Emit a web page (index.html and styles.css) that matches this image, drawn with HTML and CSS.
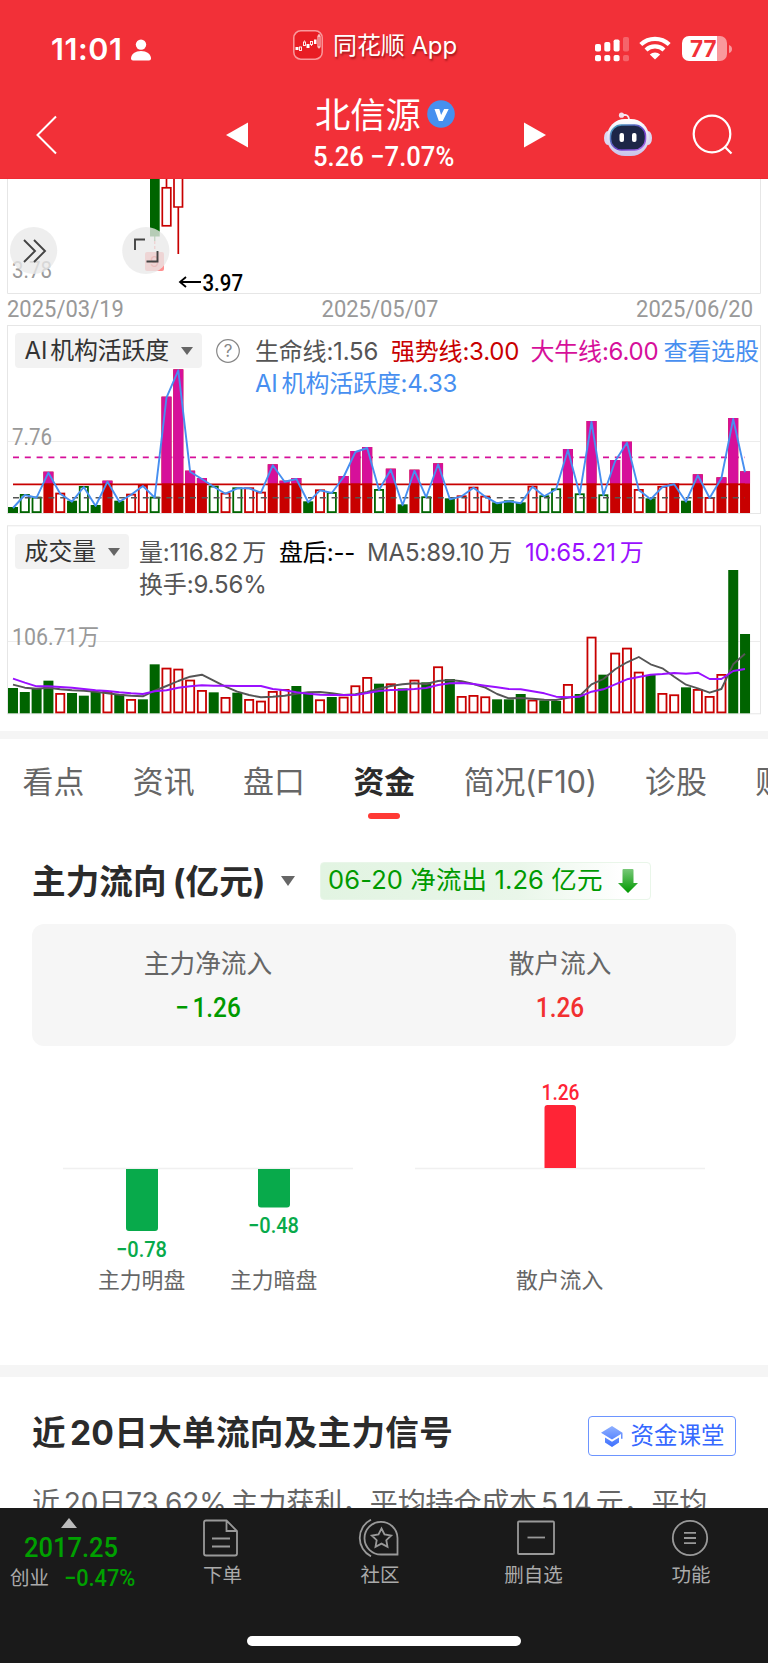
FILE: index.html
```html
<!DOCTYPE html>
<html lang="zh-CN">
<head>
<meta charset="utf-8">
<title>北信源</title>
<link rel="stylesheet" href="styles.css">
</head>
<body>
<div class="app">
  <header class="header">
    <div class="status">
      <span class="clock">11:01</span>
      <svg class="person" width="20" height="22" viewBox="0 0 20 22"><circle cx="10" cy="5.6" r="5.2" fill="#fff"/><path d="M0 19.5C0 15 4.500 12 10 12s10 3 10 7.500q0 2-2 2H2q-2 0-2-2z" fill="#fff"/></svg>
      <svg class="app-icon" width="30" height="30" viewBox="0 0 30 30"><rect x=".8" y=".8" width="28.400" height="28.400" rx="7" fill="#e81d24" stroke="#f9999c" stroke-width="1.500"/><g fill="#fff"><rect x="2.500" y="17" width="3" height="3"/><rect x="13.500" y="14" width="3" height="4"/><rect x="21" y="9.500" width="2.500" height="4.500"/></g><g fill="none" stroke="#fff" stroke-width=".9"><rect x="6.500" y="17" width="2" height="3.500"/><rect x="10.500" y="12" width="2" height="3.500"/><rect x="17.500" y="11.500" width="2" height="3"/><rect x="25" y="6" width="2" height="11"/><path d="M11.500 10.500v1M18.500 14.500v1.500M26 4v2M26 17v1.500"/></g></svg>
      <span class="app-name">同花顺 App</span>
      <svg class="signal" width="34" height="25" viewBox="0 0 34 25" fill="#fff"><rect x="0" y="7" width="6" height="7.500" rx="1.800"/><rect x="9.300" y="5" width="6" height="9.500" rx="1.800"/><rect x="18.600" y="2.500" width="6" height="12" rx="1.800"/><rect x="0" y="18" width="6" height="6.200" rx="1.800"/><rect x="9.300" y="18" width="6" height="6.200" rx="1.800"/><rect x="18.600" y="18" width="6" height="6.200" rx="1.800"/><g opacity=".25"><rect x="28" y="0" width="6" height="14.500" rx="1.800"/><rect x="28" y="18" width="6" height="6.200" rx="1.800"/></g></svg>
      <svg class="wifi" width="32" height="24" viewBox="0 0 32 24"><path d="M1.800 8.600a20.500 20.500 0 0 1 28.400 0M7 14a13 13 0 0 1 18 0" fill="none" stroke="#fff" stroke-width="4.200"/><path d="M10.800 18.500a7.500 7.500 0 0 1 10.400 0L16 23.600z" fill="#fff"/></svg>
      <div class="battery"><span>77</span></div>
      <svg class="nub" width="3" height="8" viewBox="0 0 3 8"><path d="M0 0q3 1 3 4t-3 4z" fill="#f9989c"/></svg>
    </div>
    <div class="nav">
      <svg class="back" width="22" height="40" viewBox="0 0 22 40"><path d="M20 1.500 1.500 20 20 38.500" fill="none" stroke="#fff" stroke-width="2"/></svg>
      <svg class="prev" width="22" height="26" viewBox="0 0 22 26"><path d="M22 .5v25L0 13z" fill="#fff"/></svg>
      <div class="stock">
        <div class="stock-name">北信源<svg width="28" height="28" viewBox="0 0 28 28"><circle cx="14" cy="14" r="13.800" fill="#4690ef"/><path d="M7.500 9h4.800l1.800 6 3-6h4.600l-6 12h-3.900z" fill="#fff"/></svg></div>
        <div class="stock-price">5.26 −7.07%</div>
      </div>
      <svg class="next" width="22" height="26" viewBox="0 0 22 26"><path d="M0 .5v25L22 13z" fill="#fff"/></svg>
      <svg class="robot" width="48" height="44" viewBox="0 0 48 44"><defs><linearGradient id="rb" x1="0" y1="0" x2="0" y2="1"><stop offset="0" stop-color="#fff"/><stop offset="1" stop-color="#c9c3ea"/></linearGradient><linearGradient id="rim" x1="0" y1="0" x2="1" y2="1"><stop offset="0" stop-color="#42aaba"/><stop offset=".6" stop-color="#6b3cc8"/><stop offset="1" stop-color="#b070f0"/></linearGradient></defs><circle cx="17.500" cy="3.200" r="2.600" fill="#f5dfea"/><path d="M18 3h4q3 1 3 5" fill="none" stroke="#f5e4ee" stroke-width="1.800"/><ellipse cx="4" cy="26" rx="4" ry="7" fill="#dcd6f1"/><ellipse cx="44" cy="26" rx="4" ry="7" fill="#dcd6f1"/><rect x="3" y="7" width="42" height="37" rx="18" fill="url(#rb)"/><rect x="6.500" y="13" width="35" height="25" rx="11" fill="#1d2647" stroke="url(#rim)" stroke-width="1.500"/><rect x="15.500" y="21" width="4.500" height="9" rx="2" fill="#fff"/><rect x="28" y="21" width="4.500" height="9" rx="2" fill="#fff"/></svg>
      <svg class="search" width="42" height="42" viewBox="0 0 42 42" fill="none" stroke="#fff" stroke-width="2.200"><circle cx="20" cy="20" r="18.300"/><path d="m32.500 32.500 7 7"/></svg>
    </div>
  </header>

  <section class="kline">
    <svg width="768" height="115" viewBox="0 179 768 115">
      <path d="M7.500 179v114.500h753V179" fill="none" stroke="#e6e6e6"/>
      <rect x="150" y="179" width="9.700" height="57.500" fill="#006400"/>
      <path d="M154.800 236v5" stroke="#006400"/>
      <path d="M154.800 241v10" stroke="#f55" stroke-dasharray="3 2"/>
      <rect x="145" y="252" width="19" height="19" rx="2" fill="#ff8e8e"/>
      <text x="150" y="267" font-size="15" fill="#e22">9</text>
      <g fill="#fff" stroke="#c80000" stroke-width="1.700"><path d="M166.500 179v9M178.300 207v47"/><rect x="162.300" y="187.800" width="8.500" height="38"/><path d="M174 179v28h8.500v-28"/></g>
      <text class="num axis" x="12" y="277.500" textLength="40" lengthAdjust="spacingAndGlyphs">3.78</text>
      <g fill="#e9e9e9" fill-opacity=".78"><circle cx="33.600" cy="250.500" r="23.600"/><circle cx="145.800" cy="250.500" r="23.600"/></g>
      <path d="m24 240 11 11-11 11M34 240l11 11-11 11" fill="none" stroke="#444" stroke-width="1.900"/>
      <path d="M135 250v-10.500h10M157.500 251v10.500h-11" fill="none" stroke="#444" stroke-width="1.900"/>
      <path d="M201 282h-21m6-5-6 5 6 5" fill="none" stroke="#000" stroke-width="1.800"/>
      <text class="num low" x="202.500" y="290.500" textLength="40.500" lengthAdjust="spacingAndGlyphs">3.97</text>
    </svg>
  </section>
  <div class="dates num"><span>2025/03/19</span><span>2025/05/07</span><span>2025/06/20</span></div>

  <section class="panel panel-ai">
    <svg class="plot" id="ai" width="768" height="190" viewBox="0 325 768 190"></svg>
    <div class="chip chip-ai">AI<i></i>机构活跃度<b class="caret"></b></div>
    <svg class="help" width="26" height="26" viewBox="0 0 26 26"><circle cx="13" cy="13" r="11.300" fill="none" stroke="#888" stroke-width="1.200"/><text x="13" y="19" text-anchor="middle" font-size="17" fill="#888">?</text></svg>
    <div class="legend legend-ai">
      <span>生命线:1.56</span><span class="red">强势线:3.00</span><span class="pink">大牛线:6.00</span><span class="blue">查看选股</span>
      <span class="blue wide">AI<i></i>机构活跃度:4.33</span>
    </div>
  </section>

  <section class="panel panel-vol">
    <svg class="plot" id="vol" width="768" height="190" viewBox="0 525 768 190"></svg>
    <div class="chip chip-vol">成交量<b class="caret"></b></div>
    <div class="legend legend-vol">
      <span>量:116.82<i></i>万</span><span class="black">盘后:--</span><span>MA5:89.10<i></i>万</span><span class="purple">10:65.21<i></i>万</span>
      <span class="wide">换手:9.56%</span>
    </div>
  </section>

  <div class="band band-1"></div>

  <nav class="tabs">
    <span>看点</span><span>资讯</span><span>盘口</span><span class="on">资金</span><span class="f10">简况(F10)</span><span>诊股</span><span>财务</span>
  </nav>

  <section class="flow">
    <div class="flow-head">
      <h2>主力流向<i></i>(亿元)</h2><b class="caret big"></b>
      <div class="tag"><span>06-20 净流出 1.26 亿元</span><svg width="20" height="24" viewBox="0 0 20 24"><defs><linearGradient id="ar" x1="0" y1="0" x2="0" y2="1"><stop offset="0" stop-color="#78c878"/><stop offset="1" stop-color="#009900"/></linearGradient></defs><path d="M5.500 0h9q1 0 1 1v13H20L10 24 0 14h4.500V1q0-1 1-1z" fill="url(#ar)"/></svg></div>
    </div>
    <div class="card">
      <div><p>主力净流入</p><strong class="num down"><em>−</em>1.26</strong></div>
      <div><p>散户流入</p><strong class="num up">1.26</strong></div>
    </div>
    <svg class="bars" width="768" height="319" viewBox="0 1046 768 319">
      <path d="M63 1168.500h290M415 1168.500h290" stroke="#f0f0f0" stroke-width="1.500"/>
      <path d="M126 1169h32v59q0 3-3 3h-26q-3 0-3-3zM258 1169h32v35.500q0 3-3 3h-26q-3 0-3-3z" fill="#08aa4b"/>
      <path d="M544.500 1168v-60q0-3 3-3H573q3 0 3 3v60z" fill="#ff2436"/>
      <g class="num" font-size="22" font-weight="500"><text x="116" y="1257" textLength="51" lengthAdjust="spacingAndGlyphs" fill="#08aa4b">−0.78</text><text x="248" y="1232.500" textLength="51" lengthAdjust="spacingAndGlyphs" fill="#08aa4b">−0.48</text><text x="541.500" y="1099.500" textLength="38" lengthAdjust="spacingAndGlyphs" fill="#ff2436">1.26</text></g>
      <g font-size="21.800" fill="#666"><text x="98" y="1287.500">主力明盘</text><text x="230" y="1287.500">主力暗盘</text><text x="516" y="1287.500">散户流入</text></g>
    </svg>
  </section>

  <div class="band band-2"></div>

  <section class="signal-sec">
    <div class="sig-head">
      <h2>近<i></i>20日大单流向及主力信号</h2>
      <div class="class-btn"><svg width="22" height="21" viewBox="0 0 22 21"><defs><linearGradient id="cap" x1="0" y1="0" x2="0" y2="1"><stop offset="0" stop-color="#8fb0ff"/><stop offset="1" stop-color="#3d70ff"/></linearGradient></defs><path d="M11 0l10.500 6.800v6h-1.500V8L11 13.500 0 6.800zM4 11.500l7 4.200 7-4.200v5L11 21l-7-4.500z" fill="url(#cap)"/></svg><span>资金课堂</span></div>
    </div>
    <p class="desc">近<i></i>20日73.62%<i></i>主力获利，平均持仓成本<i></i>5.14<i></i>元，平均</p>
  </section>

  <footer class="tabbar">
    <div class="index"><b class="tri"></b><span class="num idx">2017.25</span><div class="idx-row"><span>创业</span><span class="num pct">−0.47%</span></div></div>
    <div class="item i1"><svg width="36" height="38" viewBox="0 0 36 38"><path d="M3 1.500h20.500L34 12v22.500q0 2-2 2H3q-2 0-2-2v-31q0-2 2-2zM23.500 1.500V12H34M9 19.500h18M9 27.500h18"/></svg><span>下单</span></div>
    <div class="item i2"><svg width="42" height="38" viewBox="0 0 42 38"><path d="M39.500 35.500H23.500A16.500 16.300 0 1 1 39.500 19zM13 .7A20.500 20.500 0 0 0 13 37.300M23.500 9.500l3 6 6.700 1-4.900 4.700 1.200 6.600-6-3.200-6 3.200 1.200-6.600-4.900-4.700 6.700-1z"/></svg><span>社区</span></div>
    <div class="item i3"><svg width="38" height="38" viewBox="0 0 38 38"><rect x="1" y="2.500" width="36" height="32.500" rx="1"/><path d="M10.500 18.500h17.500"/></svg><span>删自选</span></div>
    <div class="item i4"><svg width="38" height="38" viewBox="0 0 38 38"><circle cx="19" cy="19" r="17.200"/><path d="M13 13.800h12M13 19h12M13 24.200h12"/></svg><span>功能</span></div>
    <div class="home"></div>
  </footer>
</div>
<script src="charts.js"></script>
</body>
</html>
```
FILE: styles.css
```css
* { box-sizing: border-box; }
body { margin: 0; background: #fff; font-family: Inter, "Noto Sans CJK SC", sans-serif; color: #333; }
h2, p { margin: 0; }
svg { display: block; flex: none; }
i { display: inline-block; width: 4px; }
.app { width: 768px; height: 1663px; overflow: hidden; position: relative; display: flex; flex-direction: column; }
.app > * { flex: none; }
.num { font-family: Roboto, "Noto Sans CJK SC", sans-serif; }

.header { height: 179px; background: #f23038; color: #fff; border-bottom: 1px solid #ee2b33; }
.status { height: 98px; display: flex; align-items: flex-start; white-space: nowrap; }
.clock { width: 80px; margin: 30px 0 0 51px; font-size: 30.500px; line-height: 38px; font-weight: 600; letter-spacing: .6px; }
.person { margin-top: 38.500px; }
.app-icon { margin: 30px 0 0 142px; }
.app-name { width: 262px; margin: 29px 0 0 10px; font-size: 24px; line-height: 34px; text-shadow: 1px 2px 2px rgba(80, 0, 0, .5); letter-spacing: -.1px; }
.signal { margin-top: 37px; }
.wifi { margin: 36px 0 0 10px; }
.battery { width: 45px; height: 25px; margin: 36px 0 0 11px; border-radius: 7px; background: linear-gradient(90deg, #fff 77%, #f9989c 77%); color: #f23038; font-size: 22.500px; line-height: 25px; font-weight: 700; padding-left: 8px; }
.nub { margin: 45px 0 0 2px; }
.nav { height: 80px; display: flex; align-items: flex-start; }
.back { margin: 17px 0 0 36px; }
.prev { margin: 23.500px 0 0 168px; }
.stock { width: 150px; margin: -8.500px 0 0 66px; }
.stock-name { display: flex; align-items: center; height: 46px; font-size: 35.300px; white-space: nowrap; gap: 6.500px; margin-left: 1px; }
.stock-name svg { margin-top: 2px; }
.stock-price { font-family: Roboto, sans-serif; font-size: 28px; font-weight: 500; line-height: 36px; white-space: nowrap; margin: 3px 0 0 -1px; transform: scaleX(.915); transform-origin: left; width: 156px; }
.next { margin: 23.500px 0 0 60px; }
.robot { margin: 14px 0 0 58px; }
.search { margin: 16px 0 0 40px; }

.kline { height: 115px; }
.axis { font-size: 23px; fill: #999; }
.low { font-size: 23.500px; font-weight: 500; fill: #000; }
.dates { display: flex; justify-content: space-between; height: 31px; padding: 0 15px 0 7px; font-size: 23.500px; line-height: 30px; color: #999; }
.dates span { transform: scaleX(.935); width: 126px; text-align: center; }
.dates span:first-child { transform-origin: left; text-align: left; }
.dates span:last-child { transform-origin: right; text-align: right; }

.panel { position: relative; display: flex; align-items: flex-start; height: 200px; font-size: 24px; white-space: nowrap; color: #555; }
.panel-vol { height: 206px; }
.plot { position: absolute; left: 0; top: 0; }
.chip { position: relative; margin: 8px 0 0 15px; height: 35px; padding-left: 9.500px; border-radius: 4px; background: #f2f2f2; font-size: 23.900px; line-height: 35px; color: #333; display: flex; align-items: center; }
.chip-ai { width: 187px; letter-spacing: -.1px; }
.chip-ai i { width: 3px; }
.chip-vol { width: 114px; margin-top: 9px; }
.caret { border: 6px solid transparent; border-top: 8px solid #666; border-bottom: 0; margin-left: 11.500px; }
.caret.big { border-width: 10px 7.500px 0; margin-left: 17px; }
.help { position: relative; margin: 13px 0 0 12.500px; }
.legend { position: relative; display: grid; line-height: 32px; grid-auto-rows: 32px; }
.legend-ai { grid-template-columns: 136px 139.500px 133px 100px; margin: 11px 0 0 14.500px; letter-spacing: -.2px; }
.legend-vol { grid-template-columns: 140px 88px 158px 130px; margin: 12px 0 0 10px; letter-spacing: -.15px; }
.wide { grid-column: 1 / -1; }
.red { color: #c80000; }
.pink { color: #d6109a; }
.blue { color: #478ff0; }
.black { color: #000; }
.purple { color: #9a10ff; }

.band { background: #f5f5f5; }
.band-1 { height: 8px; }
.band-2 { height: 12px; }

.tabs { display: flex; height: 96px; padding-left: 22.500px; gap: 49px; font-size: 30.900px; line-height: 86px; color: #666; white-space: nowrap; overflow: hidden; }
.tabs span { flex: none; width: 61.300px; }
.tabs .f10 { width: 132.300px; letter-spacing: -.2px; }
.tabs .on { position: relative; font-weight: 700; color: #2b2b2b; }
.tabs .on::after { content: ""; position: absolute; left: 14.500px; top: 74px; width: 32px; height: 6px; border-radius: 3px; background: #ff3a35; }

.flow-head { display: flex; align-items: center; height: 89px; padding: 3px 0 0 32px; }
.flow-head, .sig-head { white-space: nowrap; }
h2 { font-size: 33.600px; line-height: 44px; font-weight: 700; color: #2b2b2b; }
.flow-head h2 { width: 232px; padding-top: 1px; letter-spacing: .1px; }
.flow-head h2 i { width: 6px; }
.tag { margin-left: 25px; width: 331px; height: 38px; display: flex; align-items: center; border: 1px solid #e9f6e9; border-radius: 4px; background: linear-gradient(90deg, #e2f4e2, #e9f6e9 60%, #fff 92%); color: #009a00; font-size: 25.500px; padding-left: 7px; margin-top: -1px; }
.tag span { width: 290px; line-height: 30px; margin-top: -1px; letter-spacing: .12px; }
.card { margin: 0 32px; height: 122px; border-radius: 12px; background: #f6f6f6; display: grid; grid-template-columns: 1fr 1fr; text-align: center; }
.card p { font-size: 25.700px; line-height: 34px; color: #666; padding-top: 23px; height: 65px; }
.card strong { display: block; font-size: 28px; line-height: 38px; font-weight: 500; transform: scaleX(.87); }
.card em { font-style: normal; margin-right: 4px; }
.down { color: #009a00; }
.up { color: #f23030; }

.signal-sec { height: 131px; overflow: hidden; padding: 39px 32px 0; }
.sig-head { display: flex; justify-content: space-between; align-items: flex-start; height: 66px; }
.sig-head h2 { line-height: 34px; letter-spacing: .3px; }
.class-btn { width: 148px; height: 40px; display: flex; align-items: center; gap: 8px; border: 1.500px solid #6d95ff; border-radius: 4px; padding-left: 11.500px; font-size: 23.500px; color: #3668ff; }
.class-btn span { line-height: 30px; margin-top: -1px; }
.desc { font-size: 28px; line-height: 40px; color: #666; white-space: nowrap; letter-spacing: -.15px; padding-top: 1px; }

.tabbar { position: relative; height: 155px; background: #1a1a1a; color: #aaa; font-size: 19.500px; display: flex; white-space: nowrap; }
.index { width: 143px; display: flex; flex-direction: column; padding: 10px 0 0 10px; }
.tri { border: 8.500px solid transparent; border-bottom: 10px solid #bbb; border-top: 0; width: 0; margin-left: 50.500px; }
.idx { color: #00a000; font-size: 28px; line-height: 38px; font-weight: 500; margin: 1px 0 -1px 14px; width: 110px; transform: scaleX(.91); transform-origin: left; }
.idx-row { display: flex; line-height: 24px; gap: 14.500px; }
.pct { color: #00a000; font-size: 23.500px; font-weight: 500; transform: scaleX(.925); transform-origin: left; }
.item { display: flex; flex-direction: column; align-items: center; width: 100px; padding-top: 10.500px; }
.item svg { fill: none; stroke: #999; stroke-width: 1.800; }
.item span { line-height: 37px; }
.i1 { margin-left: 29.500px; }
.i1 svg { margin-left: -3px; }
.i2 { margin-left: 57.500px; }
.i2 svg { margin-left: -2px; }
.i3 { margin-left: 53.500px; }
.i3 svg { margin-left: 4px; }
.i4 { margin-left: 57.500px; }
.i4 svg { margin-left: -3px; }
.home { position: absolute; left: 247px; top: 128px; width: 274px; height: 10px; border-radius: 5px; background: #fff; }
```
FILE: charts.js
```js
const NS = "http://www.w3.org/2000/svg";
const START = 13, STEP = 11.807;
const GREEN = "#006400", RED = "#c80000", PINK = "#d6109a";

function add(svg, tag, attrs, text) {
  const node = document.createElementNS(NS, tag);
  for (const key in attrs) node.setAttribute(key, attrs[key]);
  if (text) node.textContent = text;
  svg.appendChild(node);
}
function bar(svg, i, top, base, color, filled) {
  const x = START + STEP * i - 5;
  if (filled) add(svg, "rect", { x, y: top, width: 10, height: base - top, fill: color });
  else add(svg, "rect", { x: x + .9, y: top + .9, width: 8.2, height: base - top - 1.8, fill: "#fff", stroke: color, "stroke-width": 1.8 });
}
function line(svg, ys, color) {
  const points = ys.map((y, i) => (START + STEP * i).toFixed(1) + "," + y.toFixed(1)).join(" ");
  add(svg, "polyline", { points, fill: "none", stroke: color, "stroke-width": 1.9, "stroke-linejoin": "round" });
}
function frame(svg, top, bottom, grid) {
  add(svg, "rect", { x: 7.5, y: top, width: 753, height: bottom - top, fill: "none", stroke: "#e6e6e6" });
  add(svg, "path", { d: `M8 ${grid}H760`, stroke: "#ececec" });
}

/* Kinds: G/R solid green and red-pink bars, g/r hollow bars */
const ai = "G561 g522 g530 R455 r518 G542 g498 G555 R482 G542 r521 r495 g530 R230 R148 R452 R474 g497 r518 g502 r502 r515 R433 R482 R474 G544 r508 g516 R468 R393 R381 g507 R446 G553 R449 g529 R430 G535 r526 r500 r527 G547 G541 G547 r497 g526 g505 R387 g520 R303 g523 R420 R365 r507 G535 r498 R490 G542 R463 r531 R472 R294 R454".split(" ");
const aiSvg = document.getElementById("ai");
frame(aiSvg, 325.5, 513.5, 441.5);
add(aiSvg, "text", { class: "num axis", x: 12, y: 445, textLength: 40, lengthAdjust: "spacingAndGlyphs" }, "7.76");
const aiY = ai.map(s => 320 + s.slice(1) / 3);
ai.forEach((s, i) => {
  const kind = s[0], color = kind.toLowerCase() === "g" ? GREEN : RED;
  bar(aiSvg, i, aiY[i], 513, color, kind === "G" || kind === "R");
  if (kind === "R" && aiY[i] < 483.5) bar(aiSvg, i, aiY[i], 483.5, PINK, true);
});
add(aiSvg, "path", { d: "M13 457.400H745", stroke: PINK, "stroke-width": 1.8, "stroke-dasharray": "6 5.800" });
add(aiSvg, "path", { d: "M13 497.700H745", stroke: "#555", "stroke-width": 1.6, "stroke-dasharray": "6 5.800" });
add(aiSvg, "path", { d: "M13 484.400H745", stroke: "#c80000", "stroke-width": 1.8 });
line(aiSvg, aiY.map(y => y + 1), "#478ff0");

const vol = "G504 G516 G506 G482 r519 G519 G527 G516 r513 G523 r537 G538 G433 r443 r446 r479 r510 G517 r531 G518 r537 r542 r513 r507 G498 G517 r538 G531 r530 r496 r471 G491 r490 G505 r479 G487 r439 G477 r528 r525 r529 G538 G538 G522 r539 G541 G543 r492 G522 r350 G464 r398 r383 r455 G465 r519 r523 G502 r507 r528 r462 G150 G342".split(" ");
const ma5 = [494,503,506,503,508,511,512,515,520,524,527,529,512,498,483,470,464,482,500,515,525,532,530,527,521,517,516,520,525,523,516,506,498,493,490,492,483,480,484,492,503,522,535,534,536,539,540,533,528,493,477,448,427,411,433,445,470,494,505,518,507,433,401];
const ma10 = [476,488,499,499,501,503,507,511,513,517,520,522,514,511,503,499,496,497,497,498,498,498,507,511,517,521,524,525,525,525,519,513,510,509,507,504,495,490,489,492,497,502,507,508,514,520,530,532,530,515,508,493,478,471,464,462,459,461,458,477,477,453,447];
const volSvg = document.getElementById("vol");
frame(volSvg, 525.8, 713.8, 641.5);
add(volSvg, "text", { class: "num axis", x: 12, y: 645, textLength: 87, lengthAdjust: "spacingAndGlyphs" }, "106.71万");
vol.forEach((s, i) => bar(volSvg, i, 520 + s.slice(1) / 3, 713.3, s[0] === "G" ? GREEN : RED, s[0] === "G"));
line(volSvg, ma5.map(y => 520 + y / 3), "#555");
line(volSvg, ma10.map(y => 520 + y / 3), "#9a10ff");
```
